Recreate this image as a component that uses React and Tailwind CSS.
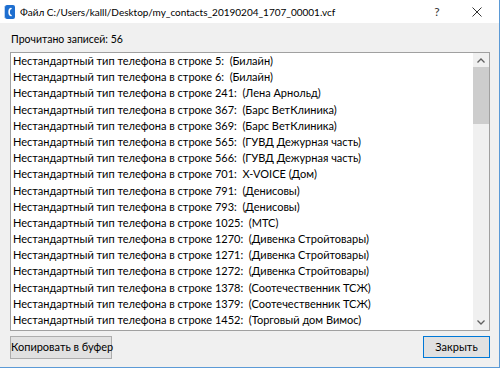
const rows = [
  ["5", "(Билайн)"],
  ["6", "(Билайн)"],
  ["241", "(Лена Арнольд)"],
  ["367", "(Барс ВетКлиника)"],
  ["369", "(Барс ВетКлиника)"],
  ["565", "(ГУВД Дежурная часть)"],
  ["566", "(ГУВД Дежурная часть)"],
  ["701", "X-VOICE (Дом)"],
  ["791", "(Денисовы)"],
  ["793", "(Денисовы)"],
  ["1025", "(МТС)"],
  ["1270", "(Дивенка Стройтовары)"],
  ["1271", "(Дивенка Стройтовары)"],
  ["1272", "(Дивенка Стройтовары)"],
  ["1378", "(Соотечественник ТСЖ)"],
  ["1379", "(Соотечественник ТСЖ)"],
  ["1452", "(Торговый дом Вимос)"],
];

const AppIcon = () => (
  <svg width="11" height="14" viewBox="0 0 11 14" className="shrink-0">
    <rect x="1" y="0" width="10" height="14" rx="2" fill="#1e6fd0" />
    <path d="M0 2h1M0 4h1M0 6h1M0 8h1M0 10h1M0 12h1" stroke="#7aa7e0" strokeWidth="1" />
    <path d="M7 3.5 C4.5 4 4.5 10 7 10.5" stroke="#fff" strokeWidth="1.6" fill="none" strokeLinecap="round" />
  </svg>
);

const App = () => {
  return (
    <div
      className="w-[500px] h-[368px] bg-[#f0f0f0] border border-[#5b9ad6] border-t-0 border-l-0 flex flex-col text-[11px] text-black overflow-hidden"
      style={{ fontFamily: "Lato, 'Liberation Sans', sans-serif" }}
    >
      <div className="h-[23px] bg-white flex items-center pl-[4px] shrink-0 whitespace-nowrap">
        <AppIcon />
        <span className="ml-[5px] mt-[1px] text-[10px]">Файл C:/Users/kalll/Desktop/my_contacts_20190204_1707_00001.vcf</span>
        <span className="ml-auto w-[20px] text-center text-[12px] text-[#333]">?</span>
        <span className="ml-[20px] mr-[12px] w-[20px] flex justify-center">
          <svg width="10" height="10" viewBox="0 0 10 10">
            <path d="M0.5 0.5L9.5 9.5M9.5 0.5L0.5 9.5" stroke="#333" strokeWidth="1" />
          </svg>
        </span>
      </div>
      <div className="flex-1 flex flex-col pl-[10px] pr-[9px] pb-[7px]">
        <div className="h-[29px] flex items-center pl-[1px] pt-[5px] whitespace-nowrap text-[10.5px]">Прочитано записей: 56</div>
        <div className="h-[279px] bg-white border border-[#a0a0a0] flex overflow-hidden">
          <div className="flex-1 pl-[2px] overflow-hidden">
            {rows.map(([n, name]) => (
              <div key={n} className="h-[16.2px] leading-[16.2px] whitespace-nowrap">
                Нестандартный тип телефона в строке {n}:&nbsp; {name}
              </div>
            ))}
          </div>
          <div className="w-[16px] bg-[#f0f0f0] flex flex-col items-center">
            <div className="h-[14px] flex items-center justify-center">
              <svg width="8" height="5" viewBox="0 0 8 5">
                <path d="M0.5 4.5L4 1L7.5 4.5" stroke="#606060" strokeWidth="1.3" fill="none" />
              </svg>
            </div>
            <div className="w-full h-[57px] bg-[#cdcdcd]" />
            <div className="flex-1" />
            <div className="h-[16px] flex items-center justify-center">
              <svg width="8" height="5" viewBox="0 0 8 5">
                <path d="M0.5 0.5L4 4L7.5 0.5" stroke="#606060" strokeWidth="1.3" fill="none" />
              </svg>
            </div>
          </div>
        </div>
        <div className="flex justify-between mt-[5px]">
          <button className="h-[23px] w-[102px] whitespace-nowrap bg-[#e1e1e1] border border-[#adadad] text-[11px]">
            Копировать в буфер
          </button>
          <button className="h-[22px] w-[67px] whitespace-nowrap bg-[#e1e1e1] border border-[#0078d7] text-[11px]">
            Закрыть
          </button>
        </div>
      </div>
    </div>
  );
};

export default App;
